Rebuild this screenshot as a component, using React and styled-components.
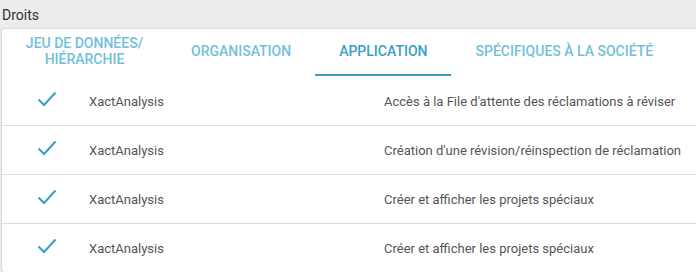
import React from "react";
import styled, { createGlobalStyle } from "styled-components";

const Global = createGlobalStyle`
  html, body { margin: 0; padding: 0; background: #ececec; overflow: hidden; }
  body { font-family: Roboto, "Noto Sans", sans-serif; }
`;

const Page = styled.div`
  width: 696px;
  height: 272px;
  overflow: hidden;
  padding-left: 2px;
  box-sizing: border-box;
`;

const Label = styled.div`
  font-size: 14px;
  color: #333;
  height: 29px;
  line-height: 17px;
  padding-top: 7px;
  box-sizing: border-box;
`;

const Card = styled.div`
  background: #fff;
  border-radius: 3px;
  box-shadow: 0 0 2px rgba(0, 0, 0, 0.25);
  width: 720px;
`;

const TabBar = styled.div`
  display: flex;
  height: 48px;
`;

const Tab = styled.div`
  display: flex;
  align-items: center;
  justify-content: center;
  box-sizing: border-box;
  padding: ${(p) => (p.$narrow ? "0 12px 2px" : "0 24px 2px")};
  width: ${(p) => (p.$narrow ? "165px" : "auto")};
  flex-shrink: 0;
  text-align: center;
  font-size: 14px;
  font-weight: 500;
  line-height: 16px;
  text-transform: uppercase;
  color: ${(p) => (p.$active ? "#3a9dc6" : "#72bfdb")};
  border-bottom: 2px solid ${(p) => (p.$active ? "#3a9dc6" : "transparent")};
  margin-bottom: 1px;
`;

const Row = styled.div`
  display: grid;
  grid-template-columns: 87px 295px 1fr;
  align-items: center;
  height: 48px;
  border-top: ${(p) => (p.$first ? "none" : "1px solid #dedede")};
  font-size: 13px;
  color: #555;
`;

const CheckCell = styled.div`
  display: flex;
  justify-content: center;
  padding-left: 2px;
  padding-bottom: 4px;
`;

const Check = () => (
  <svg width="20" height="16" viewBox="0 0 20 16">
    <path d="M1.5 8.5 L7 14 L18.5 1.5" fill="none" stroke="#3a9dc6" strokeWidth="2" />
  </svg>
);

const rows = [
  "Accès à la File d'attente des réclamations à réviser",
  "Création d'une révision/réinspection de réclamation",
  "Créer et afficher les projets spéciaux",
  "Créer et afficher les projets spéciaux",
];

export default function App() {
  return (
    <Page>
      <Global />
      <Label>Droits</Label>
      <Card>
        <TabBar>
          <Tab $narrow>JEU DE DONNÉES/ HIÉRARCHIE</Tab>
          <Tab>Organisation</Tab>
          <Tab $active>Application</Tab>
          <Tab>Spécifiques à la société</Tab>
        </TabBar>
        {rows.map((r, i) => (
          <Row key={i} $first={i === 0}>
            <CheckCell>
              <Check />
            </CheckCell>
            <div>XactAnalysis</div>
            <div>{r}</div>
          </Row>
        ))}
      </Card>
    </Page>
  );
}
